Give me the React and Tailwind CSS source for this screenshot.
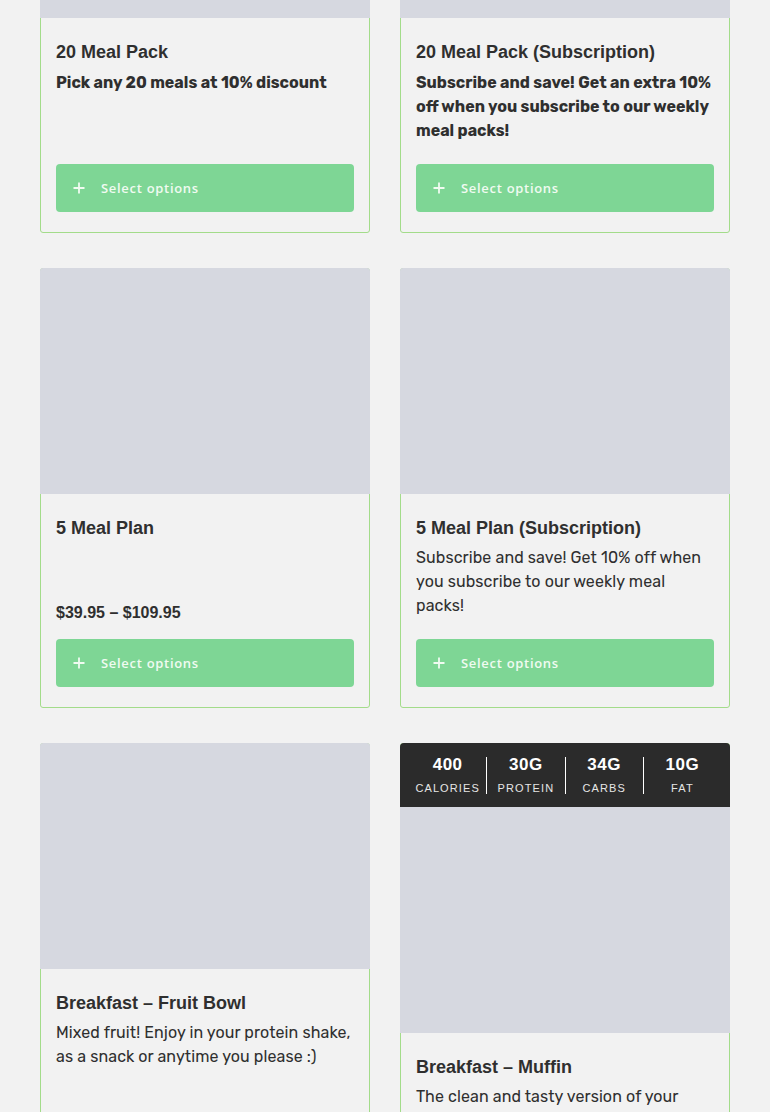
import React from "react";

const bodyFont = { fontFamily: "Rubik, Inter, 'Noto Sans', sans-serif" };

function Button() {
  return (
    <div className="flex h-12 items-center rounded-[4px] bg-[#7ed695] pl-[17px] text-[#f0fbf1]">
      <svg width="12" height="12" viewBox="0 0 12 12" className="mr-[16px]">
        <path d="M6 0.5V11.5M0.5 6H11.5" stroke="currentColor" strokeWidth="1.8" />
      </svg>
      <span className="pt-[2px] text-[13px] font-semibold tracking-[0.7px] [font-family:'Open_Sans',sans-serif]">
        Select options
      </span>
    </div>
  );
}

function Nutrition() {
  const items = [
    ["400", "CALORIES"],
    ["30G", "PROTEIN"],
    ["34G", "CARBS"],
    ["10G", "FAT"],
  ];
  return (
    <div className="-mx-px -mt-px flex h-[64px] items-center rounded-t-[4px] bg-[#2b2b2b] px-[9px] text-white [font-family:'Liberation_Sans',Arial,sans-serif]">
      {items.map(([v, l], i) => (
        <div
          key={l}
          className={`flex h-[37px] flex-1 flex-col items-center justify-between ${i < 3 ? "border-r border-white" : ""}`}
        >
          <span className="-mt-[2px] text-[17px] font-bold leading-[20px] tracking-[0.5px]">{v}</span>
          <span className="-mb-px text-[11px] leading-[14px] tracking-[1.1px] text-[#e6e6e6]">{l}</span>
        </div>
      ))}
    </div>
  );
}

function Card({ title, desc, descBold, price, nutrition }) {
  return (
    <div className="flex flex-col rounded-[3px] border border-[#a3dc8a] bg-[#f2f2f2]">
      {nutrition && <Nutrition />}
      <div className={`-mx-px ${nutrition ? "" : "-mt-px rounded-t-[3px]"} h-[226px] bg-[#d6d8e0]`} />
      <div className="flex flex-1 flex-col px-[15px] pb-[20px] pt-[23px] text-[#2f2f2f]">
        <h2 className="text-[18px] font-bold leading-[22px] [font-family:'Liberation_Sans',Arial,sans-serif]">
          {title}
        </h2>
        {desc && (
          <p
            className={`mb-[21px] text-[16px] leading-[24px] ${descBold ? "mt-[8px] font-bold" : "mt-[7px] tracking-[0.1px]"}`}
            style={bodyFont}
          >
            {desc}
          </p>
        )}
        <div className="mt-auto">
          {price && (
            <div className="mb-[14px] text-[16px] font-bold leading-[24px] [font-family:'Liberation_Sans',Arial,sans-serif]">
              {price}
            </div>
          )}
          {!nutrition && <Button />}
        </div>
      </div>
    </div>
  );
}

export default function App() {
  return (
    <div className="h-[1112px] overflow-hidden bg-[#f2f2f2]">
      <div className="-mt-[208px] grid grid-cols-2 gap-x-[30px] gap-y-[35px] px-10">
        <Card title="20 Meal Pack" desc="Pick any 20 meals at 10% discount" descBold />
        <Card
          title="20 Meal Pack (Subscription)"
          desc="Subscribe and save! Get an extra 10% off when you subscribe to our weekly meal packs!"
          descBold
        />
        <Card title="5 Meal Plan" price="$39.95 – $109.95" />
        <Card
          title="5 Meal Plan (Subscription)"
          desc="Subscribe and save! Get 10% off when you subscribe to our weekly meal packs!"
        />
        <Card
          title="Breakfast – Fruit Bowl"
          desc="Mixed fruit! Enjoy in your protein shake, as a snack or anytime you please :)"
        />
        <Card
          title="Breakfast – Muffin"
          desc="The clean and tasty version of your favourite breakfast muffin, packed with protein and flavour."
          nutrition
        />
      </div>
    </div>
  );
}
